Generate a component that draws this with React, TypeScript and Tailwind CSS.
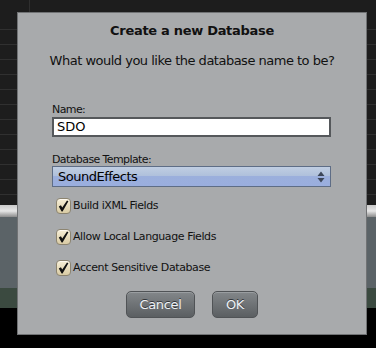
import React from "react";

function Check() {
  return (
    <span className="flex items-center justify-center w-[15px] h-[16px] rounded-[4px] border border-[#8c8470] bg-gradient-to-b from-[#f6eed6] to-[#d9cba4] shadow-[inset_0_1px_0_#fffaf0]">
      <svg width="11" height="12" viewBox="0 0 11 12">
        <path d="M0.8 6.6 L2.9 5.3 L4.3 7.6 L9 0.6 L10.4 1.3 L4.6 11.4 L3.6 11.4 Z" fill="#111" />
      </svg>
    </span>
  );
}

function Option({ label }: { label: string }) {
  return (
    <div className="flex items-center h-[16px] pl-[38px]">
      <Check />
      <span className="ml-[2px] text-[11px] leading-[16px] tracking-[-0.4px] text-[#111]">{label}</span>
    </div>
  );
}

function Button({ label, w }: { label: string; w: string }) {
  return (
    <button
      className={`${w} h-[27px] rounded-[5px] border border-[#505356] bg-gradient-to-b from-[#83878a] to-[#5b5f62] text-[13px] tracking-[-0.3px] text-[#eef2f6] [text-shadow:0_-1px_0_#33363a] shadow-[inset_0_1px_0_#9a9ea1]`}
    >
      {label}
    </button>
  );
}

export default function App() {
  return (
    <div className="relative w-[376px] h-[348px] overflow-hidden bg-black font-['DejaVu_Sans',sans-serif]">
      {/* app behind the sheet */}
      <div className="flex flex-col h-full">
        <div className="h-[12px] bg-[#1d1d1d]">
          <div className="w-[30px] h-full border-r border-[#2f2f2f]" />
        </div>
        <div className="h-[193px] bg-[#1d1d1d] bg-[repeating-linear-gradient(to_bottom,transparent_0px,transparent_14px,#303030_14px,#303030_15px)] [background-position:0_3px]" />
        <div className="h-[12px] bg-gradient-to-b from-[#c9c9c9] via-[#e6e6e6] to-[#8c8c8c]" />
        <div className="h-[71px] bg-[#5b6367]" />
        <div className="h-[20px] bg-[#3b4a40]" />
        <div className="flex-1 bg-black" />
      </div>

      {/* dialog */}
      <div className="absolute left-[17px] top-[12px] w-[350px] h-[323px] bg-[#a8aaac] border border-[#707274] flex flex-col">
        <h1 className="mt-[8px] text-center text-[13px] leading-[20px] tracking-[-0.3px] font-bold text-[#111]">Create a new Database</h1>
        <p className="mt-[11px] text-center text-[13px] leading-[18px] tracking-[-0.5px] text-[#111]">What would you like the database name to be?</p>

        <div className="mt-[33px] pl-[34px] pr-[35px]">
          <div className="text-[11px] leading-[14px] tracking-[-0.6px] text-[#111]">Name:</div>
          <div className="h-[20px] border-2 border-[#55585b] bg-white flex items-center px-[3px] text-[13px] text-black">SDO</div>
          <div className="mt-[16px] text-[11px] leading-[13px] tracking-[-0.6px] text-[#111]">Database Template:</div>
          <div className="relative h-[21px] border border-[#5e6d86] bg-[linear-gradient(to_bottom,#c0cee2_0%,#aebfdb_50%,#9bafdc_50%,#9aaede_100%)] flex items-center px-[5px] text-[13px] tracking-[-0.5px] text-black">
            SoundEffects
            <svg className="absolute right-[5px] top-[4px]" width="8" height="12" viewBox="0 0 8 12">
              <path d="M4 0.5 L7.5 5 L0.5 5 Z M4 11.5 L7.5 7 L0.5 7 Z" fill="#3c4658" />
            </svg>
          </div>
        </div>

        <div className="mt-[11px] flex flex-col gap-[15px]">
          <Option label="Build iXML Fields" />
          <Option label="Allow Local Language Fields" />
          <Option label="Accent Sensitive Database" />
        </div>

        <div className="mt-[15px] flex justify-center gap-[17px]">
          <Button label="Cancel" w="w-[69px]" />
          <Button label="OK" w="w-[46px]" />
        </div>
      </div>
    </div>
  );
}
